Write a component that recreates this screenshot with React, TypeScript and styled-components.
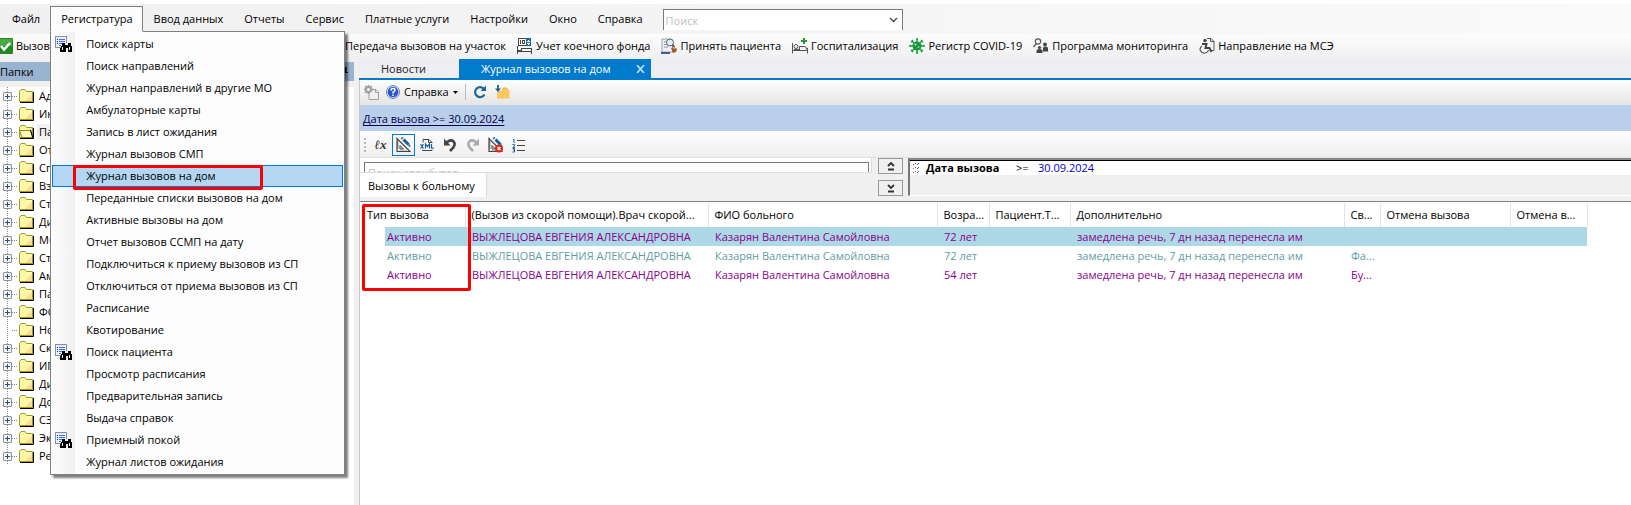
import React from "react";
import styled, { createGlobalStyle, css } from "styled-components";

const GlobalStyle = createGlobalStyle`
  *, *::before, *::after { box-sizing: border-box; }
  html, body { margin: 0; background: #fff; }
  body, button, input, select, table {
    font-family: "Open Sans", "Noto Sans", sans-serif;
    font-size: 11px;
    line-height: 16px;
    color: #000;
  }
  button { background: none; border: 0; padding: 0; white-space: nowrap; }
  ul { list-style: none; margin: 0; padding: 0; }
  svg { display: block; flex: none; }
`;

/* ---------- window frame ---------- */

const Window = styled.div`
  display: flex;
  flex-direction: column;
  min-height: 100vh;
  padding-top: 4px;
  overflow: hidden;
`;

const MenuBar = styled.nav`
  display: flex;
  align-items: flex-start;
  height: 30px;
  padding: 2px 0 0 1px;
  background: linear-gradient(90deg, #f0f0f0, #fafafa);
`;

const MenuGroup = styled.div`
  position: relative;
`;

const MenuButton = styled.button<{ $open?: boolean }>`
  display: block;
  height: 26px;
  padding: 0 9px 1px 10px;
  border: 1px solid transparent;
  ${(p) =>
    p.$open &&
    css`
      position: relative;
      z-index: 3;
      background: #fcfcfc;
      border-color: #808080;
      border-bottom-color: #fcfcfc;
    `}
`;

const Combo = styled.div`
  display: flex;
  align-items: center;
  width: 240px;
  height: 21px;
  margin: 3px 0 0 10px;
  border: 1px solid #7a7a7a;
  border-bottom: 0;
  background: #fff;
`;

const ComboInput = styled.input`
  flex: 1;
  min-width: 0;
  height: 18px;
  padding: 0 2px;
  border: 0;
  background: none;
  &::placeholder { color: #c0c0c0; opacity: 1; }
`;

const ComboArrow = styled.button`
  display: flex;
  align-items: center;
  justify-content: center;
  width: 17px;
  height: 20px;
`;

/* ---------- drop-down menu ---------- */

const Dropdown = styled.ul`
  position: absolute;
  z-index: 2;
  top: 25px;
  left: 0;
  width: 295px;
  padding: 1px;
  border: 1px solid #808080;
  background: linear-gradient(90deg, #fcfcfc, #f1f1f1 24px, #fdfdfd 24px);
  box-shadow: 3px 3px 2px rgba(0, 0, 0, 0.5);
`;

const DropdownItem = styled.li`
  position: relative;
`;

const DropdownButton = styled.button<{ $active?: boolean }>`
  display: flex;
  align-items: center;
  width: 100%;
  height: 22px;
  border: 1px solid ${(p) => (p.$active ? "#0078d7" : "transparent")};
  background: ${(p) => (p.$active ? "#b3d7f3" : "none")};
`;

const DropdownIcon = styled.span`
  width: 33px;
  height: 17px;
  padding-left: 2px;
`;

const Highlight = styled.span`
  position: absolute;
  z-index: 1;
  border: 3px solid #fe0000;
  border-radius: 2px;
  pointer-events: none;
`;

const MenuHighlight = styled(Highlight)`
  inset: 0 80px -3px 21px;
`;

const ColumnHighlight = styled(Highlight)`
  top: 2px;
  left: 2px;
  width: 109px;
  height: 87px;
`;

/* ---------- main toolbar ---------- */

const Toolbar = styled.div`
  display: flex;
  align-items: center;
  height: 25px;
  background: linear-gradient(#fdfdfd, #efefef);
`;

const ToolButton = styled.button`
  display: flex;
  align-items: center;
  gap: 3px;
  height: 24px;
  padding: 0 11px 1px 0;
`;

const FirstTool = styled(ToolButton)`
  width: 329px;
  margin-left: -3px;
`;

/* ---------- body ---------- */

const Body = styled.div`
  display: flex;
  flex: 1;
  background: #eeeef2;
`;

const Side = styled.aside`
  display: flex;
  flex-direction: column;
  flex: none;
  width: 359px;
  padding: 3px 5px 0 0;
  background: #f0f0f0;
`;

const SideTitle = styled.div`
  display: flex;
  align-items: center;
  justify-content: space-between;
  height: 19px;
  padding: 0 6px 0 0;
  margin-bottom: 6px;
  background: #99b4d1;
`;

const Tree = styled.ul`
  flex: 1;
  background: #fff;
`;

const TreeRow = styled.li`
  display: flex;
  align-items: center;
  height: 18px;
  padding-left: 3px;
  background: repeating-linear-gradient(#909090 0 1px, transparent 1px 2px) 7px 0 / 1px 18px no-repeat;
`;

const Expander = styled.button`
  display: flex;
  align-items: center;
  justify-content: center;
  width: 9px;
  height: 9px;
  border: 1px solid #919191;
  border-radius: 1px;
  background: #f6f6f6;
`;

const ExpanderGap = styled.span`
  width: 9px;
`;

const TreeDots = styled.span`
  width: 5px;
  margin-right: 2px;
  border-top: 1px dotted #909090;
`;

const TreeLabel = styled.span<{ $selected?: boolean }>`
  margin-left: 3px;
  padding: 0 2px;
  background: ${(p) => (p.$selected ? "#f0f0f0" : "none")};
`;

/* ---------- document area ---------- */

const Main = styled.main`
  display: flex;
  flex-direction: column;
  flex: 1;
  min-width: 0;
`;

const TabStrip = styled.div`
  display: flex;
  height: 21px;
  border-bottom: 2px solid #007acc;
`;

const DocTab = styled.button<{ $active?: boolean }>`
  display: flex;
  align-items: center;
  justify-content: space-between;
  width: ${(p) => (p.$active ? 192 : 100)}px;
  height: 19px;
  padding: 0 6px 0 22px;
  color: ${(p) => (p.$active ? "#fff" : "#1e1e1e")};
  background: ${(p) => (p.$active ? "#007acc" : "none")};
`;

const Pane = styled.div`
  display: flex;
  flex-direction: column;
  flex: 1;
  border-left: 1px solid #c8c8cc;
  background: #f0f0f0;
`;

const PaneTools = styled(Toolbar)`
  padding: 0 0 1px 4px;
  background: linear-gradient(#fdfdfd, #e5e5e5);
`;

const HelpButton = styled(ToolButton)`
  margin-left: 7px;
  padding: 0 7px 0 0;
  gap: 4px;
`;

const Divider = styled.span`
  width: 1px;
  height: 16px;
  margin-right: 7px;
  background: #bdbdbd;
`;

const IconButton = styled.button`
  display: flex;
  margin-right: 8px;
`;

const FilterBar = styled.div`
  display: flex;
  align-items: center;
  height: 26px;
  padding: 2px 0 0 3px;
  background: #b9cfea;
`;

const FilterLink = styled.a`
  color: #000050;
  text-decoration: underline;
  text-underline-offset: 2px;
`;

const EditTools = styled(Toolbar)`
  height: 27px;
  padding: 2px 0 0 4px;
  border-bottom: 1px solid #e0e0e0;
`;

const Grip = styled.span`
  width: 2px;
  height: 14px;
  margin-right: 3px;
  background: repeating-linear-gradient(#b8b8b8 0 2px, transparent 2px 4px);
`;

const SquareButton = styled.button<{ $pressed?: boolean }>`
  display: flex;
  align-items: center;
  justify-content: center;
  width: 23px;
  height: 22px;
  border: 1px solid ${(p) => (p.$pressed ? "#0078d7" : "transparent")};
`;

const Formula = styled.span`
  font: italic bold 13px/16px "Liberation Serif", "DejaVu Serif", serif;
  color: #333;
`;

const Builder = styled.section`
  display: flex;
  height: 43px;
`;

const AttributeColumn = styled.div`
  display: flex;
  flex-direction: column;
  flex: none;
  width: 518px;
`;

const AttributeClip = styled.div`
  height: 15px;
  margin-right: 6px;
  padding: 4px 2px 0 4px;
  overflow: hidden;
  background: #fff;
  border-right: 1px solid #dcdcdc;
  border-bottom: 1px solid #dcdcdc;
`;

const AttributeInput = styled.input`
  display: block;
  width: 100%;
  height: 21px;
  padding: 0 3px;
  border: 1px solid #7a7a7a;
  background: #fff;
  &::placeholder { color: #c0c0c0; opacity: 1; }
`;

const PageTab = styled.button`
  align-self: flex-start;
  min-width: 127px;
  height: 24px;
  padding: 1px 8px 0;
  background: #fff;
  border-right: 1px solid #dcdcdc;
  text-align: left;
`;

const MoveButtons = styled.div`
  display: flex;
  flex-direction: column;
  justify-content: space-between;
  height: 38px;
  margin-right: 5px;
`;

const MoveButton = styled.button`
  display: flex;
  align-items: center;
  justify-content: center;
  width: 25px;
  height: 16px;
  border: 1px solid #9a9a9a;
`;

const Rules = styled.div`
  flex: 1;
  height: 38px;
  border-top: 2px solid #888;
  border-left: 2px solid #777;
  border-bottom: 1px solid #fff;
`;

const Rule = styled.div`
  display: flex;
  align-items: center;
  height: 15px;
  padding-left: 3px;
  border-top: 1px solid #000;
  background: #fff;
`;

const RuleName = styled.strong`
  width: 90px;
  margin-left: 7px;
`;

const RuleSign = styled.span`
  width: 22px;
`;

const RuleValue = styled.span`
  color: #0000d0;
`;

/* ---------- calls grid ---------- */

const Grid = styled.section`
  position: relative;
  flex: 1;
  padding: 1px 0 0 1px;
  border-top: 1px solid #82828c;
  background: #fff;
`;

const Table = styled.table`
  width: 1226px;
  table-layout: fixed;
  border-collapse: collapse;
`;

const HeadCell = styled.th`
  height: 24px;
  padding: 0 0 0 6px;
  border-right: 1px solid #e3e3e3;
  font-weight: 400;
  text-align: left;
  white-space: nowrap;
`;

type Tone = "selected" | "muted" | "normal";

const BodyRow = styled.tr<{ $tone: Tone }>`
  color: ${(p) => (p.$tone === "muted" ? "#5f9ea0" : "#8b008b")};
  background: ${(p) =>
    p.$tone === "selected"
      ? "linear-gradient(90deg, #fff 24px, #add8e6 24px)"
      : "none"};
`;

const Cell = styled.td`
  height: 19px;
  padding: 0 0 0 7px;
  white-space: nowrap;
  &:first-child { padding-left: 26px; }
`;

/* ---------- icons ---------- */

const SearchListIcon = () => (
  <svg width="17" height="17" viewBox="0 0 17 17" shapeRendering="crispEdges">
    <path d="M0 0h12v11H0z" fill="#e9f1ff" />
    <path d="M0 0h12v1H0zM0 0h1v11H0zM0 11h6v1H0zM11 0h1v7h-1z" fill="#8a9098" />
    <path d="M2 3h1v1H2zM2 5h1v1H2zM2 7h1v1H2z" fill="#002fb0" />
    <path d="M4 3h6v1H4zM4 5h6v1H4zM4 7h4v1H4zM4 9h2v1H4z" fill="#3b6cff" />
    <path d="M7 7h3v2h3V7h3v3h1v6h-4v-4h-2v4H5v-4h1v-2h1z" fill="#000" />
    <path d="M7 11h1v3H7zM14 11h1v3h-1z" fill="#fff" />
  </svg>
);

const CheckIcon = () => (
  <svg width="16" height="16" viewBox="0 0 16 16">
    <rect x="0" y="0" width="16" height="16" rx="1" fill="#238523" />
    <rect x="1" y="1" width="14" height="7" fill="#49a847" />
    <path d="M4 8l3 3.500L13 5" fill="none" stroke="#fff" strokeWidth="2.500" />
  </svg>
);

const BedsIcon = () => (
  <svg width="16" height="16" viewBox="0 0 16 16" shapeRendering="crispEdges">
    <path d="M1.500.500h12v7h-12z" fill="#fff" stroke="#444" />
    <path d="M3 2h1v4H3zM5 2h3v1H5zM5 5h3v1H5zM5 2h1v4H5zM7 2h1v4H7z" fill="#444" />
    <path d="M9 0h5v8H9z" fill="#1b6a9c" />
    <path d="M11 2h1v1h-1zM10 3h3v1h-3zM10 5h3v1h-3zM11 6h1v1h-1z" fill="#fff" />
    <path d="M.500 8v8M.500 13.500h14M14.500 10v6M4 10.500h10M1 12.500h3v-2" fill="none" stroke="#444" />
  </svg>
);

const AdmitIcon = () => (
  <svg width="16" height="16" viewBox="0 0 16 16">
    <path d="M1 1h9l2 2v11H1z" fill="#eef0f5" stroke="#9aa0ac" />
    <path d="M3 4h3M3 6.500h3M3 9h4" stroke="#8a94aa" />
    <path d="M0 14h9v2H0z" fill="#4a5c88" />
    <circle cx="9" cy="4.500" r="3.500" fill="#dbeefb" stroke="#666" />
    <path d="M11.500 7l2 2.500" stroke="#444" strokeWidth="1.800" />
    <path d="M10 10l3-1 3 2-1 3-3 1z" fill="#9c5a22" />
    <path d="M12 9.500l2 1" stroke="#e8b060" strokeWidth="1.500" />
  </svg>
);

const HospitalIcon = () => (
  <svg width="16" height="16" viewBox="0 0 16 16">
    <path d="M11 0h2v2h2v2h-2v2h-2V4H9V2h2z" fill="#2b9a35" />
    <path d="M.500 5v10.500M.500 12.500h15M15.500 10v5.500M7.500 12V8.500h5q2 0 2 3M2 11.500h5" fill="none" stroke="#555" />
    <circle cx="4" cy="8.500" r="2" fill="none" stroke="#555" />
  </svg>
);

const VirusIcon = () => (
  <svg width="16" height="16" viewBox="0 0 16 16">
    <circle cx="8" cy="8" r="4.500" fill="#149a3b" />
    <path d="M8 1v14M1 8h14M3 3l10 10M13 3L3 13" stroke="#149a3b" strokeWidth="1.400" />
    <path d="M7 1h2M7 15h2M1 7v2M15 7v2M2 4l2-2M12 2l2 2M2 12l2 2M12 14l2-2" stroke="#149a3b" strokeWidth="1.400" />
    <circle cx="6.500" cy="6.500" r="1" fill="#d5f0dc" />
    <circle cx="9.500" cy="9" r="1" fill="#84cf98" />
  </svg>
);

const MonitoringIcon = () => (
  <svg width="16" height="16" viewBox="0 0 16 16">
    <circle cx="5" cy="3.500" r="2.700" fill="none" stroke="#555" strokeWidth="1.200" />
    <path d="M3.500 5.500L.500 9" stroke="#555" strokeWidth="1.200" />
    <circle cx="6.500" cy="9.500" r="1.600" fill="#444" />
    <path d="M3.500 15v-2q0-2 3-2t3 2v2z" fill="#444" />
    <circle cx="12" cy="6.500" r="1.900" fill="#444" />
    <path d="M10 13.500V10q0-1.500 2.500-1.500T15 10v3.500z" fill="#444" />
  </svg>
);

const DisabilityIcon = () => (
  <svg width="16" height="16" viewBox="0 0 16 16">
    <path d="M8 .500h4l3 3v9h-4" fill="none" stroke="#555" />
    <path d="M11.500 .500v3H15" fill="none" stroke="#555" />
    <circle cx="6" cy="2.500" r="1.700" fill="#444" />
    <path d="M3 6h4.500L6.500 10h4l2 4" fill="none" stroke="#444" strokeWidth="2" />
    <path d="M3 8c-4 3-1 7.500 3 7q3-.500 3.500-3" fill="none" stroke="#555" strokeWidth="1.200" />
  </svg>
);

const FolderIcon = ({ open }: { open?: boolean }) => (
  <svg width="15" height="14" viewBox="0 0 15 14">
    <path d="M1 13.500h13.500V3" fill="none" stroke="#000" />
    <path d="M.500 12.500V2.500l1.500-2h4l1.500 2h6v10z" fill="#fdf8a8" stroke="#9c9a20" />
    <path d="M13 5v7H6z" fill="#f8cf94" opacity=".7" />
    {open && <path d="M.500 5.500h11l2 7H3z" fill="#fffbb8" stroke="#8a8818" />}
    {open && <path d="M11.500 5l2.500 8" stroke="#000" />}
  </svg>
);

const PlusIcon = () => (
  <svg width="5" height="5" viewBox="0 0 5 5" shapeRendering="crispEdges">
    <path d="M2 0h1v2h2v1H3v2H2V3H0V2h2z" fill="#2b4a94" />
  </svg>
);

const PinIcon = () => (
  <svg width="7" height="10" viewBox="0 0 7 10">
    <path d="M1.500 0h4v5H7v1H4v4H3V6H0V5h1.500z" fill="#000" />
  </svg>
);

const ChevronIcon = () => (
  <svg width="9" height="6" viewBox="0 0 9 6">
    <path d="M1 1l3.500 3.500L8 1" fill="none" stroke="#444" strokeWidth="1.300" />
  </svg>
);

const CloseIcon = () => (
  <svg width="9" height="8" viewBox="0 0 9 8">
    <path d="M1 0l7 8M8 0L1 8" stroke="#b8dcf4" strokeWidth="1.800" />
  </svg>
);

const GearPageIcon = () => (
  <svg width="15" height="15" viewBox="0 0 15 15">
    <path d="M5 8v6.500h9.500V7L12 4.500H9" fill="#f0f0f0" stroke="#a0a0a0" />
    <path d="M11.500 4.500V7.500h3" fill="none" stroke="#a0a0a0" />
    <circle cx="4.500" cy="4.500" r="2.600" fill="#f2f2f2" stroke="#a0a0a0" strokeWidth="2" />
    <path d="M4.500 0v2M4.500 7v2M0 4.500h2M7 4.500h2M1.200 1.200l1 1M7.800 1.200l-1 1M1.200 7.800l1-1" stroke="#a0a0a0" strokeWidth="1.800" />
  </svg>
);

const HelpIcon = () => (
  <svg width="14" height="14" viewBox="0 0 14 14">
    <circle cx="7" cy="7" r="6.500" fill="#dfe9fb" stroke="#6d7fae" />
    <circle cx="7" cy="7" r="5.300" fill="#2458c8" />
    <path d="M5 5.500q0-2 2-2t2 1.700Q9 6.500 7 7.300V8.500M7 9.600v1.400" fill="none" stroke="#fff" strokeWidth="1.500" />
  </svg>
);

const CaretIcon = () => (
  <svg width="5" height="3" viewBox="0 0 5 3">
    <path d="M0 0h5L2.500 3z" fill="#000" />
  </svg>
);

const RefreshIcon = () => (
  <svg width="14" height="14" viewBox="0 0 14 14">
    <path d="M11 4A5 5 0 1 0 11.500 9.500" fill="none" stroke="#1c6794" strokeWidth="2.200" />
    <path d="M13 .500V6H7.500z" fill="#1c6794" />
  </svg>
);

const FolderDownIcon = () => (
  <svg width="15" height="14" viewBox="0 0 15 14">
    <path d="M2 13.500V6h4l2-3h4l1 2h1.500v8.500z" fill="#fdc65e" />
    <path d="M7.500 4.500l1-1.500h3l1 1.500" fill="none" stroke="#e8a840" />
    <path d="M3 0v5" stroke="#1c5e8e" strokeWidth="1.800" />
    <path d="M0 3.500L3 7l3-3.500z" fill="#1c5e8e" />
  </svg>
);

const DesignIcon = ({ remove }: { remove?: boolean }) => (
  <svg width="15" height="16" viewBox="0 0 15 16">
    <path d="M1 1.500v13h13z" fill="none" stroke="#444" strokeWidth="1.200" />
    <path d="M4 8.500v3.500h3.500z" fill="none" stroke="#444" />
    <path d="M1 5h1.500M1 7h1.500M1 9h1.500M1 11h1.500M4 14.500v-1M6 14.500v-1M8 14.500v-1M10 14.500v-1" stroke="#444" />
    <path d="M7.500 2.500l5 5" stroke="#17609a" strokeWidth="3" />
    <path d="M5.500.700l1 1" stroke="#17609a" strokeWidth="2.600" />
    <path d="M12.500 7.500l1.500 2" stroke="#17609a" strokeWidth="1.500" />
    {remove && <circle cx="11" cy="11.500" r="4" fill="#df2318" />}
    {remove && <path d="M9.500 10l3 3M12.500 10l-3 3" stroke="#fff" strokeWidth="1.200" />}
  </svg>
);

const XmlIcon = () => (
  <svg width="14" height="14" viewBox="0 0 14 14">
    <path d="M3 4.500V1.500h6L12 4.500M8.500 1.500v3H12V5M2.500 11.500v1h9.500v-1" fill="none" stroke="#444" />
    <path d="M.500 6l3 4.500M3.500 6l-3 4.500M5.500 10.500V6l2 2.500 2-2.500v4.500M11.500 6v4h2.500" fill="none" stroke="#17609a" strokeWidth="1.200" />
  </svg>
);

const TurnIcon = ({ color, flip }: { color: string; flip?: boolean }) => (
  <svg width="14" height="14" viewBox="0 0 14 14">
    <g transform={flip ? "matrix(-1 0 0 1 14 0)" : undefined}>
      <path d="M3.500 4.500Q8 1 10.500 3.500T10 10L7 13" fill="none" stroke={color} strokeWidth="2.600" />
      <path d="M1 .500v7h6.500z" fill={color} />
    </g>
  </svg>
);

const NumberedIcon = () => (
  <svg width="13" height="15" viewBox="0 0 13 15">
    <path d="M1 1.500h1V5M.500 6.500h2v1l-1.500 2h2M.500 10.500h2v3.500H.500M1 12h1.500" fill="none" stroke="#17609a" />
    <path d="M5 2.500h8M5 7.500h8M5 12.500h8" stroke="#444" />
  </svg>
);

const MoveIcon = ({ down }: { down?: boolean }) => (
  <svg width="8" height="9" viewBox="0 0 8 9">
    <path d={down ? "M1 1l3 3 3-3" : "M1 4l3-3 3 3"} fill="none" stroke="#333" strokeWidth="1.800" />
    <path d="M1 7.500h6" stroke="#333" strokeWidth="2" />
  </svg>
);

const RuleGripIcon = () => (
  <svg width="6" height="11" viewBox="0 0 6 11" shapeRendering="crispEdges">
    <path d="M0 1h1v1H0zM4 1h1v1H4zM2 0h1v1H2zM5 0h1v1H5zM0 5h1v1H0zM4 5h1v1H4zM2 4h1v1H2zM5 4h1v1H5zM0 9h1v1H0zM4 9h1v1H4zM2 8h1v1H2zM5 8h1v1H5z" fill="#666" />
  </svg>
);

/* ---------- data ---------- */

const menuBefore = ["Файл"];
const menuAfter = ["Ввод данных", "Отчеты", "Сервис", "Платные услуги", "Настройки", "Окно", "Справка"];

const registryItems: { label: string; icon?: boolean; active?: boolean }[] = [
  { label: "Поиск карты", icon: true },
  { label: "Поиск направлений" },
  { label: "Журнал направлений в другие МО" },
  { label: "Амбулаторные карты" },
  { label: "Запись в лист ожидания" },
  { label: "Журнал вызовов СМП" },
  { label: "Журнал вызовов на дом", active: true },
  { label: "Переданные списки вызовов на дом" },
  { label: "Активные вызовы на дом" },
  { label: "Отчет вызовов ССМП на дату" },
  { label: "Подключиться к приему вызовов из СП" },
  { label: "Отключиться от приема вызовов из СП" },
  { label: "Расписание" },
  { label: "Квотирование" },
  { label: "Поиск пациента", icon: true },
  { label: "Просмотр расписания" },
  { label: "Предварительная запись" },
  { label: "Выдача справок" },
  { label: "Приемный покой", icon: true },
  { label: "Журнал листов ожидания" },
];

const tools = [
  { label: "Учет коечного фонда", Icon: BedsIcon },
  { label: "Принять пациента", Icon: AdmitIcon },
  { label: "Госпитализация", Icon: HospitalIcon },
  { label: "Регистр COVID-19", Icon: VirusIcon },
  { label: "Программа мониторинга", Icon: MonitoringIcon },
  { label: "Направление на МСЭ", Icon: DisabilityIcon },
];

const folders = [
  "Ад", "Ин", "Па", "От", "Сп", "Вз", "Ст", "Ди", "МС", "Ст", "Ам",
  "Па", "ФО", "Но", "Ск", "ИП", "Ди", "До", "СЭ", "Эк", "Ре",
];
const openFolder = 2;
const leafFolder = 13;

const columns = [
  { title: "Тип вызова", width: 104 },
  { title: "(Вызов из скорой помощи).Врач скорой...", width: 243 },
  { title: "ФИО больного", width: 229 },
  { title: "Возра...", width: 52 },
  { title: "Пациент.Т...", width: 81 },
  { title: "Дополнительно", width: 274 },
  { title: "Св...", width: 36 },
  { title: "Отмена вызова", width: 130 },
  { title: "Отмена в...", width: 77 },
];

const note = "замедлена речь, 7 дн назад перенесла им";
const doctor = "ВЫЖЛЕЦОВА ЕВГЕНИЯ АЛЕКСАНДРОВНА";
const patient = "Казарян Валентина Самойловна";

const rows: { tone: Tone; cells: string[] }[] = [
  { tone: "selected", cells: ["Активно", doctor, patient, "72 лет", "", note, "", "", ""] },
  { tone: "muted", cells: ["Активно", doctor, patient, "72 лет", "", note, "Фа...", "", ""] },
  { tone: "normal", cells: ["Активно", doctor, patient, "54 лет", "", note, "Бу...", "", ""] },
];

/* ---------- page ---------- */

export default function App() {
  return (
    <>
      <GlobalStyle />
      <Window>
        <MenuBar>
          {menuBefore.map((m) => (
            <MenuButton key={m}>{m}</MenuButton>
          ))}
          <MenuGroup>
            <MenuButton $open aria-expanded="true">Регистратура</MenuButton>
            <Dropdown>
              {registryItems.map((item) => (
                <DropdownItem key={item.label}>
                  <DropdownButton $active={item.active}>
                    <DropdownIcon>{item.icon && <SearchListIcon />}</DropdownIcon>
                    {item.label}
                  </DropdownButton>
                  {item.active && <MenuHighlight />}
                </DropdownItem>
              ))}
            </Dropdown>
          </MenuGroup>
          {menuAfter.map((m) => (
            <MenuButton key={m}>{m}</MenuButton>
          ))}
          <Combo>
            <ComboInput placeholder="Поиск" aria-label="Поиск" />
            <ComboArrow aria-label="Открыть список">
              <ChevronIcon />
            </ComboArrow>
          </Combo>
        </MenuBar>

        <Toolbar>
          <FirstTool>
            <CheckIcon />
            Вызовы
          </FirstTool>
          <ToolButton>
            <CheckIcon />
            Передача вызовов на участок
          </ToolButton>
          {tools.map(({ label, Icon }) => (
            <ToolButton key={label}>
              <Icon />
              {label}
            </ToolButton>
          ))}
        </Toolbar>

        <Body>
          <Side>
            <SideTitle>
              Папки
              <PinIcon />
            </SideTitle>
            <Tree>
              {folders.map((name, i) => (
                <TreeRow key={i}>
                  {i === leafFolder ? (
                    <ExpanderGap />
                  ) : (
                    <Expander aria-label="Развернуть">
                      <PlusIcon />
                    </Expander>
                  )}
                  <TreeDots />
                  <FolderIcon open={i === openFolder} />
                  <TreeLabel $selected={i === openFolder}>{name}</TreeLabel>
                </TreeRow>
              ))}
            </Tree>
          </Side>

          <Main>
            <TabStrip>
              <DocTab>Новости</DocTab>
              <DocTab $active>
                Журнал вызовов на дом
                <CloseIcon />
              </DocTab>
            </TabStrip>
            <Pane>
              <PaneTools>
                <GearPageIcon />
                <HelpButton>
                  <HelpIcon />
                  Справка
                  <CaretIcon />
                </HelpButton>
                <Divider />
                <IconButton aria-label="Обновить">
                  <RefreshIcon />
                </IconButton>
                <IconButton aria-label="Загрузить">
                  <FolderDownIcon />
                </IconButton>
              </PaneTools>
              <FilterBar>
                <FilterLink href="#filter">{"Дата вызова >= 30.09.2024"}</FilterLink>
              </FilterBar>
              <EditTools>
                <Grip />
                <SquareButton aria-label="Формула">
                  <Formula>ℓx</Formula>
                </SquareButton>
                <SquareButton $pressed aria-label="Конструктор">
                  <DesignIcon />
                </SquareButton>
                <SquareButton aria-label="XML">
                  <XmlIcon />
                </SquareButton>
                <SquareButton aria-label="Отменить">
                  <TurnIcon color="#444" />
                </SquareButton>
                <SquareButton aria-label="Вернуть">
                  <TurnIcon color="#ababab" flip />
                </SquareButton>
                <SquareButton aria-label="Очистить">
                  <DesignIcon remove />
                </SquareButton>
                <SquareButton aria-label="Нумерация">
                  <NumberedIcon />
                </SquareButton>
              </EditTools>
              <Builder>
                <AttributeColumn>
                  <AttributeClip>
                    <AttributeInput placeholder="Поиск атрибутов" aria-label="Поиск атрибутов" />
                  </AttributeClip>
                  <PageTab>Вызовы к больному</PageTab>
                </AttributeColumn>
                <MoveButtons>
                  <MoveButton aria-label="Вверх">
                    <MoveIcon />
                  </MoveButton>
                  <MoveButton aria-label="Вниз">
                    <MoveIcon down />
                  </MoveButton>
                </MoveButtons>
                <Rules>
                  <Rule>
                    <RuleGripIcon />
                    <RuleName>Дата вызова</RuleName>
                    <RuleSign>{">="}</RuleSign>
                    <RuleValue>30.09.2024</RuleValue>
                  </Rule>
                </Rules>
              </Builder>
              <Grid>
                <Table>
                  <colgroup>
                    {columns.map((c) => (
                      <col key={c.title} style={{ width: c.width }} />
                    ))}
                  </colgroup>
                  <thead>
                    <tr>
                      {columns.map((c) => (
                        <HeadCell key={c.title}>{c.title}</HeadCell>
                      ))}
                    </tr>
                  </thead>
                  <tbody>
                    {rows.map((row, i) => (
                      <BodyRow key={i} $tone={row.tone}>
                        {row.cells.map((cell, j) => (
                          <Cell key={j}>{cell}</Cell>
                        ))}
                      </BodyRow>
                    ))}
                  </tbody>
                </Table>
                <ColumnHighlight />
              </Grid>
            </Pane>
          </Main>
        </Body>
      </Window>
    </>
  );
}
